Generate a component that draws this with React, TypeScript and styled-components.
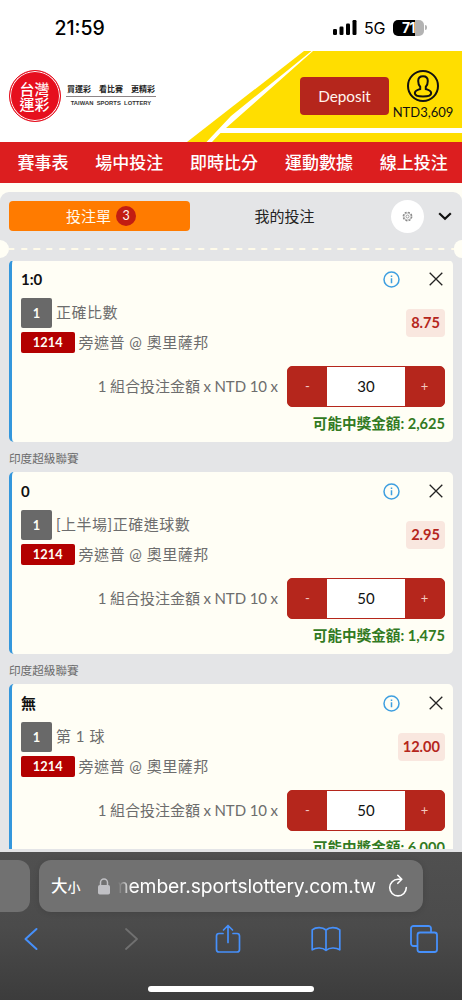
import React from 'react';
import styled, { createGlobalStyle } from 'styled-components';

const GlobalStyle = createGlobalStyle`
  *, *::before, *::after { box-sizing: border-box; }
  body { margin: 0; background: #fff; }
  button, input { font: inherit; border: 0; padding: 0; margin: 0; }
`;

const ui = `Inter, 'Noto Sans CJK TC', sans-serif`;
const body = `Lato, 'Noto Sans CJK TC', sans-serif`;

const Screen = styled.div`
  width: 462px;
  height: 1000px;
  display: flex;
  flex-direction: column;
  overflow: hidden;
  background: #fffef5;
  font-family: ${body};
  white-space: nowrap;
`;

const StatusBar = styled.div`
  height: 51px;
  flex: none;
  display: flex;
  align-items: center;
  justify-content: space-between;
  padding: 4px 35px 0 54.5px;
  background: #fff;
  color: #000;
  font-family: ${ui};
`;

const Clock = styled.div`
  font-size: 19.5px;
  font-weight: 500;
  letter-spacing: 0;
`;

const StatusIcons = styled.div`
  display: flex;
  align-items: center;
`;

const Network = styled.span`
  font-size: 16px;
  font-weight: 400;
  width: 21px;
  margin: 1px 8px 0 7px;
  letter-spacing: -0.3px;
`;

const Battery = styled.div`
  width: 31px;
  height: 16px;
  border-radius: 5px;
  background: linear-gradient(90deg, #000 71%, #b3b3b3 71%);
  color: #fff;
  font-size: 14px;
  font-weight: 700;
  line-height: 16px;
  text-align: center;
  letter-spacing: -0.5px;
`;

const BatteryCap = styled.div`
  width: 2px;
  height: 5px;
  margin-left: 1px;
  border-radius: 0 2px 2px 0;
  background: #b3b3b3;
`;

const Header = styled.header`
  position: relative;
  height: 91px;
  flex: none;
  display: flex;
  align-items: flex-start;
  background: #fff;
`;

const HeaderArt = styled.svg`
  position: absolute;
  inset: 0;
`;

const Brand = styled.div`
  display: flex;
  align-items: flex-start;
  margin: 19px 0 0 8.5px;
  flex: 1;
`;

const Seal = styled.div`
  width: 52px;
  height: 52px;
  flex: none;
  border-radius: 50%;
  border: 1.5px solid #e60f1e;
  background: #e60f1e;
  box-shadow: inset 0 0 0 1px #fff;
  color: #fff;
  display: grid;
  place-content: center;
  text-align: center;
  font: 500 15px/15px 'Noto Sans CJK TC', sans-serif;
`;

const BrandText = styled.div`
  margin: 12px 0 0 5.5px;
  width: 90px;
  text-align: center;
`;

const Slogan = styled.div`
  display: flex;
  justify-content: space-between;
  padding: 0 1px 0 1px;
  font: 700 8px/14px 'Noto Sans CJK TC', sans-serif;
  color: #222;
  border-bottom: 1px solid #8d8587;
`;

const EnglishName = styled.div`
  font: 700 5.8px/8px 'Liberation Sans', sans-serif;
  color: #333;
  margin-top: 1.5px;
  word-spacing: 1.5px;
  letter-spacing: 0.06px;
`;

const DepositButton = styled.button`
  position: relative;
  width: 89px;
  height: 38px;
  margin-top: 26px;
  border-radius: 4px;
  background: #b5261c;
  color: #fff4ee;
  font-size: 15.3px;
`;

const Account = styled.div`
  position: relative;
  width: 62px;
  margin: 18px 8px 0 3px;
  display: flex;
  flex-direction: column;
  align-items: center;
  color: #111;
  font-size: 13px;
  line-height: 19px;
`;

const Nav = styled.nav`
  height: 41px;
  flex: none;
  display: flex;
  align-items: center;
  gap: 26.8px;
  padding: 0 0 2px 17.5px;
  background: #dc1e1f;
  color: #fff;
  font-size: 17px;
  font-weight: 500;
`;

const Slip = styled.main`
  flex: 1;
  min-height: 0;
  margin-top: 9px;
  border-radius: 9px 9px 0 0;
  background: #e4e5e7;
  overflow: hidden;
`;

const Tabs = styled.div`
  height: 48px;
  display: flex;
  align-items: center;
  padding: 0 8px 0 9px;
`;

const Tab = styled.button<{ $active?: boolean }>`
  width: ${p => (p.$active ? 181 : 188)}px;
  height: 30px;
  display: flex;
  align-items: center;
  justify-content: center;
  gap: 5px;
  border-radius: 4px;
  font-size: 15px;
  line-height: 20px;
  padding: ${p => (p.$active ? '0 0 0 3px' : '0 0 1px 1px')};
  color: ${p => (p.$active ? '#fff8ee' : '#222')};
  background: ${p => (p.$active ? '#ff7b00' : 'transparent')};
`;

const TabLabel = styled.span`
  padding-bottom: 1px;
`;

const Count = styled.span`
  width: 20px;
  height: 20px;
  border-radius: 50%;
  background: #c21d12;
  font-size: 12.5px;
  line-height: 20px;
  text-align: center;
`;

const SettingsButton = styled.button`
  width: 33px;
  height: 33px;
  margin-left: 13px;
  border-radius: 50%;
  background: #fff;
  display: grid;
  place-items: center;
`;

const Chevron = styled.svg`
  margin-left: 14px;
`;

const TearLine = styled.div`
  height: 18px;
  display: flex;
  align-items: center;
  justify-content: space-between;
`;

const Dashes = styled.div`
  flex: 1;
  height: 2.5px;
  background: repeating-linear-gradient(90deg, #fffbea 0 6.3px, transparent 6.3px 12.65px) -0.7px 0;
`;

const Notch = styled.div<{ $side: 'left' | 'right' }>`
  width: 8.5px;
  height: 18px;
  background: #fffef5;
  border-radius: ${p => (p.$side === 'left' ? '0 9px 9px 0' : '9px 0 0 9px')};
`;

const BetList = styled.div`
  margin-top: 3px;
  height: 588px;
  overflow: hidden;
  padding: 0 9px;
`;

const BetGroup = styled.section<{ $first?: boolean }>`
  margin-top: ${p => (p.$first ? '-1.5px' : '0')};
`;

const League = styled.div`
  height: 30px;
  padding-top: 5px;
  line-height: 24px;
  font-size: 11.6px;
  color: #6b6b6b;
`;

const Card = styled.article`
  height: 182px;
  padding: 8.5px 8px 0 9px;
  border-left: 3px solid #3497dc;
  border-radius: 5px;
  background: #fffef5;
  color: #6d6d6d;
`;

const CardHead = styled.div`
  height: 22px;
  display: flex;
  align-items: center;
  color: #111;
  font-size: 15px;
  font-weight: 700;
  line-height: 20px;
`;

const HeadIcons = styled.div`
  margin-left: auto;
  padding-right: 2.5px;
  display: flex;
  align-items: center;
  gap: 29px;
`;

const CardMiddle = styled.div`
  margin-top: 8px;
  display: flex;
  justify-content: space-between;
  align-items: flex-start;
`;

const Lines = styled.div`
  display: grid;
  gap: 4px;
`;

const Line = styled.div<{ $h: number }>`
  height: ${p => p.$h}px;
  display: flex;
  align-items: center;
  gap: 4px;
  font-size: 15px;
  line-height: 20px;
  letter-spacing: 0.5px;
`;

const LineText = styled.span`
  padding-bottom: 1.5px;
`;

const Tag = styled.span<{ $kind: 'leg' | 'code' }>`
  width: ${p => (p.$kind === 'leg' ? 31 : 53.5)}px;
  height: 100%;
  display: grid;
  place-items: center;
  border-radius: 2px;
  background: ${p => (p.$kind === 'leg' ? '#696969' : '#b30000')};
  color: #fffef5;
  font-size: 12.8px;
  font-weight: 700;
  letter-spacing: 0.1px;
`;

const Odds = styled.div`
  height: 28px;
  margin-top: 11px;
  padding: 0 5px;
  border-radius: 4px;
  background: #f9e7df;
  color: #b5261c;
  font-size: 14.6px;
  font-weight: 700;
  line-height: 28px;
`;

const StakeRow = styled.div`
  height: 41.5px;
  margin-top: 12.5px;
  display: flex;
  align-items: center;
  justify-content: flex-end;
  gap: 9px;
  font-size: 15px;
  line-height: 20px;
`;

const StakeLabel = styled.span`
  padding-bottom: 1px;
  word-spacing: -0.35px;
`;

const Stepper = styled.div`
  width: 158px;
  height: 41.5px;
  display: flex;
  border: 1px solid #b5261c;
  border-radius: 5px;
  background: #b5261c;
  overflow: hidden;
`;

const StepButton = styled.button`
  width: 39px;
  background: #b5261c;
  color: #f3c8c0;
  font-size: 13px;
`;

const StakeValue = styled.div`
  flex: 1;
  background: #fff;
  color: #111;
  font-size: 15px;
  line-height: 38.5px;
  text-align: center;
`;

const Payout = styled.div`
  margin-top: 6px;
  height: 22px;
  line-height: 22px;
  text-align: right;
  color: #327a22;
  font-size: 14.6px;
  font-weight: 700;
`;

const Browser = styled.footer`
  height: 148px;
  flex: none;
  background: linear-gradient(#505050, #4b4b4b 50%, #3c3c3c);
  font-family: ${ui};
  color: #fff;
`;

const AddressRow = styled.div`
  display: flex;
  gap: 9px;
  padding-top: 8px;
  height: 61px;
`;

const PreviousPage = styled.div`
  width: 30px;
  height: 52px;
  border-radius: 0 12px 12px 0;
  background: #717171;
`;

const AddressBar = styled.div`
  width: 384px;
  height: 52px;
  border-radius: 12px;
  background: #717171;
  box-shadow: 0 1px 6px rgba(0, 0, 0, 0.12);
  display: flex;
  align-items: center;
  padding: 0 15px 0 12px;
`;

const TextSize = styled.div`
  display: flex;
  align-items: baseline;
  font-size: 16.5px;
  font-weight: 500;
  line-height: 24px;
`;

const SmallGlyph = styled.span`
  font-size: 13px;
`;

const LockIcon = styled.svg`
  margin-left: 17.5px;
`;

const ReloadIcon = styled.svg`
  margin-left: 12px;
`;

const Url = styled.div`
  flex: 1;
  min-width: 0;
  margin-left: 7px;
  overflow: hidden;
  display: flex;
  justify-content: flex-end;
  font-size: 19.3px;
  letter-spacing: -0.1px;
  mask-image: linear-gradient(90deg, transparent 1px, #000 15px);
`;

const Toolbar = styled.div`
  height: 60px;
  display: flex;
  align-items: center;
  justify-content: space-between;
  padding: 0 20px 8px 13px;
`;

const ToolButton = styled.button`
  width: 36px;
  height: 36px;
  display: grid;
  place-items: center;
  background: none;
`;

const HomeIndicator = styled.div`
  width: 166px;
  height: 6px;
  margin: 12.5px auto 0;
  border-radius: 3px;
  background: #fff;
`;

const bets = [
  { title: '1:0', market: '正確比數', odds: '8.75', stake: '30', payout: '2,625' },
  { title: '0', market: '[上半場]正確進球數', odds: '2.95', stake: '50', payout: '1,475' },
  { title: '無', market: '第 1 球', odds: '12.00', stake: '50', payout: '6,000' },
];

const InfoIcon = () => (
  <svg width="17" height="17" viewBox="0 0 17 17" fill="none" stroke="#3f9fe0" strokeWidth="1.5">
    <circle cx="8.5" cy="8.5" r="7.5" />
    <path d="M8.5 7.3v5M8.5 4.4v1.5" />
  </svg>
);

const CloseIcon = () => (
  <svg width="14" height="14" viewBox="0 0 14 14" fill="none" stroke="#222" strokeWidth="1.3">
    <path d="M.7.7l12.6 12.6M13.3.7L.7 13.3" />
  </svg>
);

const Bet = ({ bet, first }: { bet: (typeof bets)[number]; first: boolean }) => (
  <BetGroup $first={first}>
    {!first && <League>印度超級聯賽</League>}
    <Card>
      <CardHead>
        {bet.title}
        <HeadIcons>
          <InfoIcon />
          <CloseIcon />
        </HeadIcons>
      </CardHead>
      <CardMiddle>
        <Lines>
          <Line $h={29.5}>
            <Tag $kind="leg">1</Tag>
            <LineText>{bet.market}</LineText>
          </Line>
          <Line $h={21.5}>
            <Tag $kind="code">1214</Tag>
            <LineText>旁遮普 @ 奧里薩邦</LineText>
          </Line>
        </Lines>
        <Odds>{bet.odds}</Odds>
      </CardMiddle>
      <StakeRow>
        <StakeLabel>1 組合投注金額 x NTD 10 x</StakeLabel>
        <Stepper>
          <StepButton>-</StepButton>
          <StakeValue>{bet.stake}</StakeValue>
          <StepButton>+</StepButton>
        </Stepper>
      </StakeRow>
      <Payout>可能中獎金額: {bet.payout}</Payout>
    </Card>
  </BetGroup>
);

export default function App() {
  return (
    <>
      <GlobalStyle />
      <Screen>
        <StatusBar>
          <Clock>21:59</Clock>
          <StatusIcons>
            <svg width="24" height="15" viewBox="0 0 24 15">
              <rect x="0" y="9" width="4" height="6" rx="1.2" />
              <rect x="6.5" y="6.5" width="4" height="8.5" rx="1.2" />
              <rect x="13" y="3.5" width="4" height="11.5" rx="1.2" />
              <rect x="19.5" y="0" width="4" height="15" rx="1.2" />
            </svg>
            <Network>5G</Network>
            <Battery>71</Battery>
            <BatteryCap />
          </StatusIcons>
        </StatusBar>

        <Header>
          <HeaderArt width="462" height="91" viewBox="0 0 462 91">
            <path d="M304 0H462V91H187z" fill="#ffde00" />
            <path d="M311.5 0H313L226 77H462V82H220.5L212 91H206.5L231 65z" fill="#fff" />
          </HeaderArt>
          <Brand>
            <Seal>
              <span>台灣</span>
              <span>運彩</span>
            </Seal>
            <BrandText>
              <Slogan>
                <span>買運彩</span>
                <span>看比賽</span>
                <span>更精彩</span>
              </Slogan>
              <EnglishName>TAIWAN SPORTS LOTTERY</EnglishName>
            </BrandText>
          </Brand>
          <DepositButton>Deposit</DepositButton>
          <Account>
            <svg width="34" height="34" viewBox="0 0 34 34" fill="none" stroke="#111" strokeWidth="2">
              <circle cx="17" cy="17" r="15" />
              <path d="M14.2 17.8C12.5 16 12.2 14 12.2 12C12.2 8.8 14 7.3 17 7.3S21.8 8.8 21.8 12C21.8 14 21.5 16 19.8 17.8V20C22.5 21 25.2 21.5 25.2 24C25.2 26.5 21 27.5 17 27.5S8.8 26.5 8.8 24C8.8 21.5 11.5 21 14.2 20z" />
            </svg>
            NTD3,609
          </Account>
        </Header>

        <Nav>
          <span>賽事表</span>
          <span>場中投注</span>
          <span>即時比分</span>
          <span>運動數據</span>
          <span>線上投注</span>
        </Nav>

        <Slip>
          <Tabs>
            <Tab $active>
              <TabLabel>投注單</TabLabel>
              <Count>3</Count>
            </Tab>
            <Tab>我的投注</Tab>
            <SettingsButton>
              <svg width="11" height="11" viewBox="0 0 11 11" fill="none" stroke="#888">
                <circle cx="5.5" cy="5.5" r="4.3" strokeWidth="1.2" strokeDasharray="2 1.37" />
                <circle cx="5.5" cy="5.5" r="3.5" strokeWidth=".6" />
                <circle cx="5.5" cy="5.5" r="1.5" strokeWidth=".8" />
              </svg>
            </SettingsButton>
            <Chevron width="14" height="9" viewBox="0 0 14 9" fill="none" stroke="#111" strokeWidth="2.2">
              <path d="M1.2 1.2L7 6.8l5.8-5.6" />
            </Chevron>
          </Tabs>
          <TearLine>
            <Notch $side="left" />
            <Dashes />
            <Notch $side="right" />
          </TearLine>
          <BetList>
            {bets.map((bet, i) => (
              <Bet key={bet.title} bet={bet} first={i === 0} />
            ))}
          </BetList>
        </Slip>

        <Browser>
          <AddressRow>
            <PreviousPage />
            <AddressBar>
              <TextSize>
                大<SmallGlyph>小</SmallGlyph>
              </TextSize>
              <LockIcon width="12" height="17" viewBox="0 0 12 17">
                <rect y="7" width="12" height="9.5" rx="1.8" fill="#c0c0c4" />
                <path d="M2.5 8V4.5a3.5 3.5 0 0 1 7 0V8" fill="none" stroke="#c0c0c4" strokeWidth="1.5" />
              </LockIcon>
              <Url>member.sportslottery.com.tw</Url>
              <ReloadIcon width="20" height="24" viewBox="0 0 20 24" fill="none" stroke="#fff" strokeWidth="1.6" strokeLinecap="round" strokeLinejoin="round">
                <path d="M13.5 5.3H10A8.3 8.3 0 1 0 18.3 13.6M9.8 1.3l4 4-4 4" />
              </ReloadIcon>
            </AddressBar>
          </AddressRow>
          <Toolbar>
            <ToolButton>
              <svg width="17" height="24" viewBox="0.5 0 17 24" fill="none" stroke="#4690fb" strokeWidth="2" strokeLinecap="round" strokeLinejoin="round">
                <path d="M14 2L3 12l11 10" />
              </svg>
            </ToolButton>
            <ToolButton>
              <svg width="17" height="24" viewBox="-2 0 17 24" fill="none" stroke="#707070" strokeWidth="1.8" strokeLinecap="round" strokeLinejoin="round">
                <path d="M3 2l11 10L3 22" />
              </svg>
            </ToolButton>
            <ToolButton>
              <svg width="26" height="32" viewBox="0 0 26 32" fill="none" stroke="#4690fb" strokeWidth="1.7" strokeLinecap="round" strokeLinejoin="round">
                <path d="M8 10.5H4A2.5 2.5 0 0 0 1.5 13v13.500A2.5 2.5 0 0 0 4 29h18a2.500 2.500 0 0 0 2.500-2.500V13A2.500 2.500 0 0 0 22 10.500h-4M13 19.500V2.500M8.500 7L13 2.500L17.500 7" />
              </svg>
            </ToolButton>
            <ToolButton>
              <svg width="30" height="26" viewBox="0 0 30 26" fill="none" stroke="#4690fb" strokeWidth="1.7" strokeLinecap="round" strokeLinejoin="round">
                <path d="M15 4C11.5 .8 5 .8 1.2 3.8V23.8C5 21.3 11.5 21.3 15 24.3C18.5 21.3 25 21.3 28.8 23.8V3.8C25 .8 18.5 .8 15 4zM15 4v20" />
              </svg>
            </ToolButton>
            <ToolButton>
              <svg width="28" height="28" viewBox="0 0 28 28" fill="none" stroke="#4690fb" strokeWidth="1.8" strokeLinejoin="round">
                <rect x="7.5" y="7.5" width="19.5" height="19.5" rx="2.5" />
                <path d="M7.5 21H3.5A2.5 2.5 0 0 1 1 18.5V3.5A2.5 2.5 0 0 1 3.5 1h15A2.5 2.5 0 0 1 21 3.5v4" />
              </svg>
            </ToolButton>
          </Toolbar>
          <HomeIndicator />
        </Browser>
      </Screen>
    </>
  );
}
